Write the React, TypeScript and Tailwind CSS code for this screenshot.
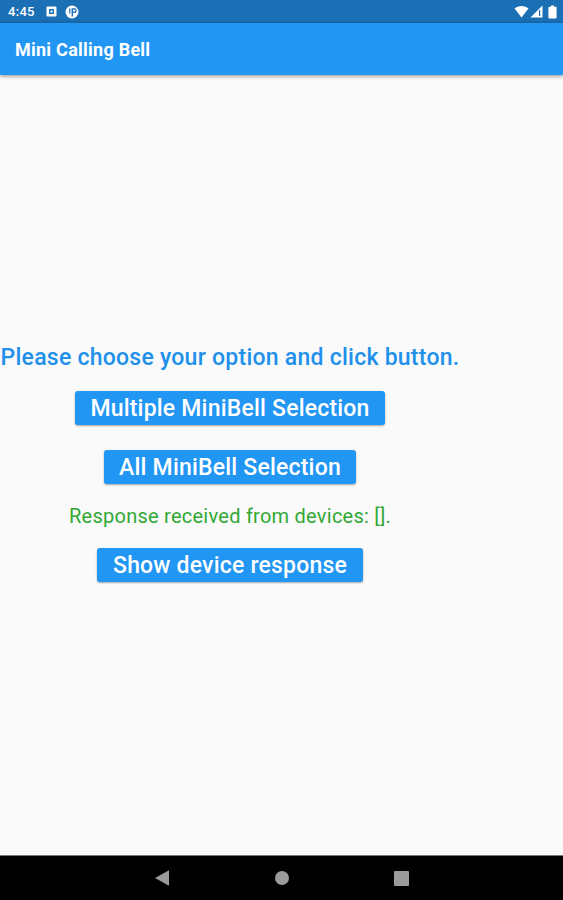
function StatusBar() {
  return (
    <div className="flex h-[23px] items-center bg-[#1a6fb5] pl-2 pr-[6px] text-white">
      <span className="text-[13px] font-medium leading-none tracking-[0.3px]">4:45</span>
      <svg className="ml-[11px]" width="11" height="11" viewBox="0 0 11 11">
        <path
          fill="currentColor"
          fillRule="evenodd"
          d="M1.5 0.5h8a1 1 0 0 1 1 1v8a1 1 0 0 1-1 1h-8a1 1 0 0 1-1-1v-8a1 1 0 0 1 1-1zM3 3v5h5V3zM4.4 4.4h2.2v2.2h-2.2z"
        />
      </svg>
      <svg className="ml-[8px]" width="14" height="14" viewBox="0 0 14 14">
        <circle cx="7" cy="7" r="6.5" fill="currentColor" />
        <path d="M4.2 3.4h1.2v5H4.2z" fill="#1a6fb5" />
        <path d="M6.6 3.2h3.2a1.8 1.8 0 0 1 1.8 1.8v1.2A1.8 1.8 0 0 1 9.8 8H8v3.4H6.6z" fill="#1a6fb5" />
        <path d="M8 4.6h2.2v2H8z" fill="currentColor" />
      </svg>

      <div className="ml-auto flex items-center">
        <svg width="15" height="13" viewBox="0 0 15 13" fill="currentColor">
          <path d="M7.5 12.5L0.5 3.6C4.3 0 10.7 0 14.5 3.6z" />
        </svg>
        <svg className="ml-px" width="13" height="13" viewBox="0 0 13 13">
          <path d="M0.5 12.5L12.5 0.5v12z" fill="currentColor" />
          <path d="M9.6 5.2v5.8" stroke="#1a6fb5" strokeWidth="1.3" />
        </svg>
        <svg className="ml-[5px]" width="9" height="14" viewBox="0 0 9 14" fill="currentColor">
          <path d="M3 0.5h3v1.2h1.6a1 1 0 0 1 1 1v9.8a1 1 0 0 1-1 1H1.4a1 1 0 0 1-1-1V2.7a1 1 0 0 1 1-1H3z" />
        </svg>
      </div>
    </div>
  )
}

function BellButton({ label, className }: { label: string; className: string }) {
  return (
    <button
      className={`h-[34px] rounded-[3px] bg-[#2196f3] text-[23px] font-medium leading-none tracking-[0.2px] whitespace-nowrap text-white shadow-[0_1px_2px_rgba(0,0,0,0.35)] ${className}`}
    >
      {label}
    </button>
  )
}

function NavigationBar() {
  return (
    <div className="flex h-[45px] items-center justify-center gap-[105px] border-t border-[#777] bg-black text-[#9b9b9b]">
      <svg width="15" height="16" viewBox="0 0 15 16" fill="currentColor">
        <path d="M0 8L14 0.3v15.4z" />
      </svg>
      <svg width="14" height="14" viewBox="0 0 14 14" fill="currentColor">
        <circle cx="7" cy="7" r="7" />
      </svg>
      <svg width="15" height="15" viewBox="0 0 15 15" fill="currentColor">
        <rect width="15" height="15" rx="1" />
      </svg>
    </div>
  )
}

export default function App() {
  return (
    <div className="flex h-screen w-full flex-col overflow-hidden bg-[#fafafa] font-[Roboto,sans-serif]">
      <StatusBar />
      <header className="flex h-[52px] items-center bg-[#2196f3] pt-[2px] pl-[15px] shadow-[0_1px_4px_rgba(0,0,0,0.45)]">
        <h1 className="text-[18px] font-bold leading-none tracking-[0.25px] text-white">Mini Calling Bell</h1>
      </header>

      <main className="flex w-[460px] flex-1 flex-col items-center pt-[268px]">
        <p className="h-[30px] text-[23px] font-medium leading-[30px] tracking-[0.25px] whitespace-nowrap text-[#2090ea]">
          Please choose your option and click button.
        </p>
        <BellButton label="Multiple MiniBell Selection" className="mt-[18px] w-[310px]" />
        <BellButton label="All MiniBell Selection" className="mt-[25px] w-[252px]" />
        <p className="mt-[17px] h-[30px] text-[20px] leading-[30px] tracking-[0.25px] whitespace-nowrap text-[#31a834]">
          Response received from devices: [].
        </p>
        <BellButton label="Show device response" className="mt-[17px] w-[266px]" />
      </main>

      <NavigationBar />
    </div>
  )
}
